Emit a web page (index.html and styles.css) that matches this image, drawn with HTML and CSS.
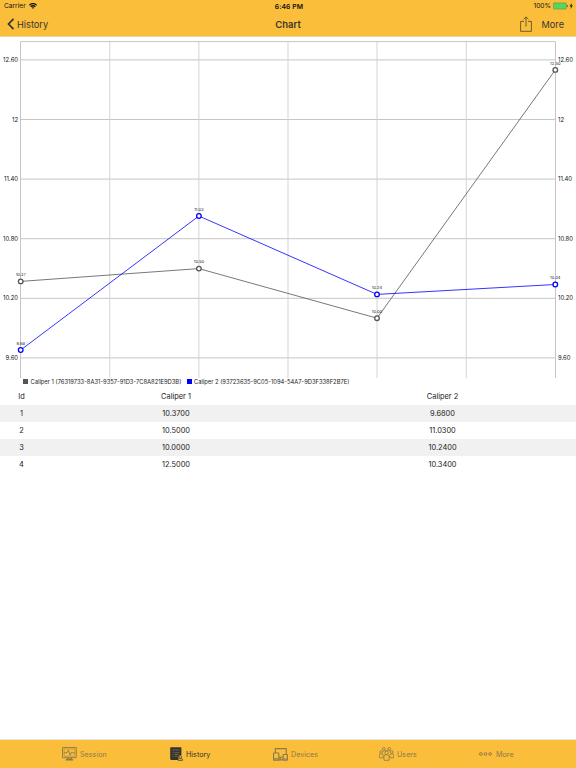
FILE: index.html
```html
<!DOCTYPE html>
<html lang="en">
<head>
<meta charset="utf-8">
<title>Chart</title>
<link rel="stylesheet" href="styles.css">
</head>
<body>
<header class="top">
  <div class="status">
    <div class="side"><span class="carrier">Carrier</span>
      <svg width="8" height="6" viewBox="0 0 8 6"><g fill="none" stroke="#111" stroke-width="1.3"><path d="M.4 2.2Q4-1 7.6 2.2M1.7 3.7Q4 1.7 6.3 3.7"/></g><path d="M2.8 4.6Q4 3.7 5.2 4.6L4 6z" fill="#111"/></svg>
    </div>
    <div class="time">6:46 PM</div>
    <div class="side right"><span class="percent">100%</span>
      <svg width="21" height="8" viewBox="0 0 21 8"><rect x=".4" y=".9" width="13" height="6.2" rx="1" fill="#4cd964" stroke="#8b7c35" stroke-width=".6"/><path d="M14.3 3v2" stroke="#55481f" stroke-width=".8"/><path d="M18.9 1 16.5 4.3H18L17.5 7l2.3-3.4h-1.4z" fill="#111"/></svg>
    </div>
  </div>
  <nav class="nav">
    <div class="side back"><svg width="8" height="12" viewBox="0 0 8 12"><path d="M6.5.8 1.5 6l5 5.2" fill="none" stroke="#333" stroke-width="1.7"/></svg><span class="back-label">History</span></div>
    <div class="title">Chart</div>
    <div class="side right actions"><svg width="12" height="16" viewBox="0 0 12 16"><path d="M4 5.4H.6v9.9h10.8V5.4H8M6 10.5V1M3.6 3.3 6 .9l2.4 2.4" fill="none" stroke="#4b4230" stroke-width=".8"/></svg><span class="more-label">More</span></div>
  </nav>
</header>

<main>
<svg class="chart" viewBox="0 37 576 340.5" width="576" height="340.5">
  <g class="grid">
    <path d="M20.5 59.9H555.5M20.5 119.5H555.5M20.5 179.1H555.5M20.5 238.7H555.5M20.5 298.3H555.5M20.5 357.9H555.5"/>
    <path class="vertical" d="M109.8 41.5V378M198.9 41.5V378M288 41.5V378M377 41.5V378M466.3 41.5V378"/>
    <path d="M20.5 378V41.6H555.5V378"/>
  </g>
  <g class="axis left">
    <text x="18" y="62">12.60</text><text x="18" y="121.6">12</text><text x="18" y="181.2">11.40</text><text x="18" y="240.8">10.80</text><text x="18" y="300.4">10.20</text><text x="18" y="360">9.60</text>
  </g>
  <g class="axis">
    <text x="558" y="62">12.60</text><text x="558" y="121.6">12</text><text x="558" y="181.2">11.40</text><text x="558" y="240.8">10.80</text><text x="558" y="300.4">10.20</text><text x="558" y="360">9.60</text>
  </g>
  <g class="series first">
    <path d="M20.7 281.4 198.9 268.6 377 318.2 555.3 69.9"/>
    <circle cx="20.7" cy="281.4" r="2.3"/><circle cx="198.9" cy="268.6" r="2.3"/><circle cx="377" cy="318.2" r="2.3"/><circle cx="555.3" cy="69.9" r="2.3"/>
  </g>
  <g class="series second">
    <path d="M20.7 350 198.9 216 377 294.4 555.3 284.5"/>
    <circle cx="20.7" cy="350" r="2.3"/><circle cx="198.9" cy="216" r="2.3"/><circle cx="377" cy="294.4" r="2.3"/><circle cx="555.3" cy="284.5" r="2.3"/>
  </g>
  <g class="values">
    <text x="20.7" y="276.1">10.37</text><text x="198.9" y="263.3">10.50</text><text x="377" y="313">10.00</text><text x="555.3" y="64.8">12.50</text>
    <text x="20.7" y="344.8">9.68</text><text x="198.9" y="210.8">11.03</text><text x="377" y="289.2">10.24</text><text x="555.3" y="279.3">10.34</text>
  </g>
</svg>
<div class="legend">
  <span class="swatch gray"></span><span class="name one">Caliper 1 (76319733-8A31-9357-91D3-7C8A821E9D3B)</span>
  <span class="swatch blue"></span><span class="name two">Caliper 2 (93723635-9C05-1094-54A7-9D3F338F2B7E)</span>
</div>
<div class="table">
  <div class="row"><span>Id</span><span>Caliper 1</span><span>Caliper 2</span></div>
  <div class="row shaded"><span>1</span><span>10.3700</span><span>9.6800</span></div>
  <div class="row"><span>2</span><span>10.5000</span><span>11.0300</span></div>
  <div class="row shaded"><span>3</span><span>10.0000</span><span>10.2400</span></div>
  <div class="row"><span>4</span><span>12.5000</span><span>10.3400</span></div>
</div>
</main>

<footer class="tabs">
  <div class="tab session"><svg width="15" height="14" viewBox="0 0 15 14"><g fill="none" stroke="currentColor"><path d="M.5.5h13.8v10.2H.5z" stroke-width=".9"/><path d="M2 2h10.8v7.2H2z" stroke-width=".5"/><path d="M2 5.8h3l1.4-2.6 1.7 5 1.4-3 .8.6h2.5" stroke-width=".9"/><path d="M5.4 10.7v1.4h4v-1.4M3.6 12.9h7.6" stroke-width="1.1"/></g></svg><span>Session</span></div>
  <div class="tab history active"><svg width="13" height="14" viewBox="0 0 13 14"><path d="M1 .3h10.4V8a3 3 0 0 0-3 3v2H1.4Q.2 13 .2 11.8V1.1Q.2.3 1 .3z" fill="currentColor"/><path d="M2.2 3h7.5M2.4 5.7h1M4.5 5.7h5M2.4 7.5h1M4.5 7.5h4M2.4 9.3h1M4.5 9.3h3.2" stroke="#a77f32" stroke-width=".6"/><circle cx="10.4" cy="9.8" r="1.3" fill="#fabe3b" stroke="currentColor" stroke-width=".7"/><path d="M8.1 13.4v-.7q0-1 1.2-1h2.2q1 0 1 1v.7z" fill="#fabe3b" stroke="currentColor" stroke-width=".7"/></svg><span>History</span></div>
  <div class="tab devices"><svg width="15" height="13" viewBox="0 0 15 13"><g fill="none" stroke="currentColor" stroke-width="1.1"><path d="M2.3 5V.6h10.9v5.7M6 9.3h4M6 11.9h4M7.2 9.5v2.3"/><rect x=".5" y="5" width="5.3" height="7.3" rx=".4"/><rect x="10.1" y="6.5" width="4.3" height="5.8" rx=".6"/><path d="M.6 10.9h5.1M10.2 11h4.1"/></g></svg><span>Devices</span></div>
  <div class="tab users"><svg width="15" height="14" viewBox="0 0 15 14"><g fill="none" stroke="currentColor" stroke-width=".8"><circle cx="4.8" cy="1.9" r="1.4"/><circle cx="10.2" cy="1.9" r="1.4"/><circle cx="2.2" cy="5.1" r="1.4"/><circle cx="12.8" cy="5.1" r="1.4"/><circle cx="7.5" cy="5.8" r="1.7"/><path d="M3.8 4.2Q6 2.9 7.5 4M11.2 4.2Q9 2.9 7.5 4M.4 10.8V8.2Q.5 6.7 2.2 6.7T4.2 8v2.8zM14.6 10.8V8.2q-.1-1.5-1.8-1.5T10.8 8v2.8zM5 13.3V9.7q0-2 2.5-2t2.5 2v3.6z"/></g></svg><span>Users</span></div>
  <div class="tab more"><svg width="13" height="4" viewBox="0 0 13 4"><g fill="none" stroke="currentColor" stroke-width=".9"><circle cx="1.9" cy="2" r="1.4"/><circle cx="6.5" cy="2" r="1.4"/><circle cx="11.1" cy="2" r="1.4"/></g></svg><span>More</span></div>
</footer>
</body>
</html>
```
FILE: styles.css
```css
* { box-sizing: border-box; }
body {
  margin: 0;
  width: 576px;
  height: 768px;
  display: flex;
  flex-direction: column;
  overflow: hidden;
  background: #fff;
  color: #222;
  font-family: Inter, "Liberation Sans", sans-serif;
}
svg { display: block; flex: none; }
.top { height: 37px; background: #fabe3b; border-bottom: 1px solid #edd5a0; }
.status, .nav { display: flex; align-items: center; justify-content: space-between; }
.status { height: 12px; padding: 0 2px 0 4px; font-size: 6.6px; color: #111; }
.side { flex: 1 1 0; display: flex; align-items: center; gap: 3px; white-space: nowrap; }
.right { justify-content: flex-end; }
.status .right { gap: 2px; }
.time { font-weight: 600; font-size: 6.8px; letter-spacing: 0.1px; }
.nav { height: 24px; padding: 0 12px 0 7px; font-size: 9.2px; color: #3b372c; }
.title { font-weight: 600; font-size: 9.5px; padding-right: 5px; transform: translateX(5px); }
.back { gap: 2px; }
.actions { gap: 10px; }
main { flex: 1; }
.grid path { fill: none; stroke: #c0c0c0; stroke-width: 0.9; }
.grid .vertical { stroke: #d0d0d0; }
.axis { font-size: 5.9px; fill: #111; }
.axis.left { text-anchor: end; }
.series path { fill: none; stroke-width: 0.8; }
.series circle { fill: #fff; stroke-width: 1.3; }
.first { stroke: #555; }
.second { stroke: #00f; }
.values { font-size: 4.1px; fill: #222; text-anchor: middle; }
.legend { height: 11px; padding: 0 0 3px 23px; display: flex; align-items: center; font-size: 5.8px; white-space: nowrap; }
.swatch { width: 5px; height: 5px; margin-right: 2.5px; }
.gray { background: #555; }
.blue { background: #00f; }
.name.one { width: 156px; }
.row { display: grid; grid-template-columns: 43px 266px 267px; height: 16.85px; align-items: center; text-align: center; font-size: 7.4px; }
.shaded { background: #f1f1f1; }
.tabs { height: 28px; padding-left: 62px; background: #fabe3b; box-shadow: 0 -1px #e8e6e0; display: flex; }
.tab { display: flex; align-items: center; gap: 3px; font-size: 7.2px; color: #8d784c; }
.session { width: 108px; }
.history { width: 103px; }
.devices { width: 106px; }
.users { width: 100px; }
.more { gap: 4px; }
.active { color: #333; }
```
